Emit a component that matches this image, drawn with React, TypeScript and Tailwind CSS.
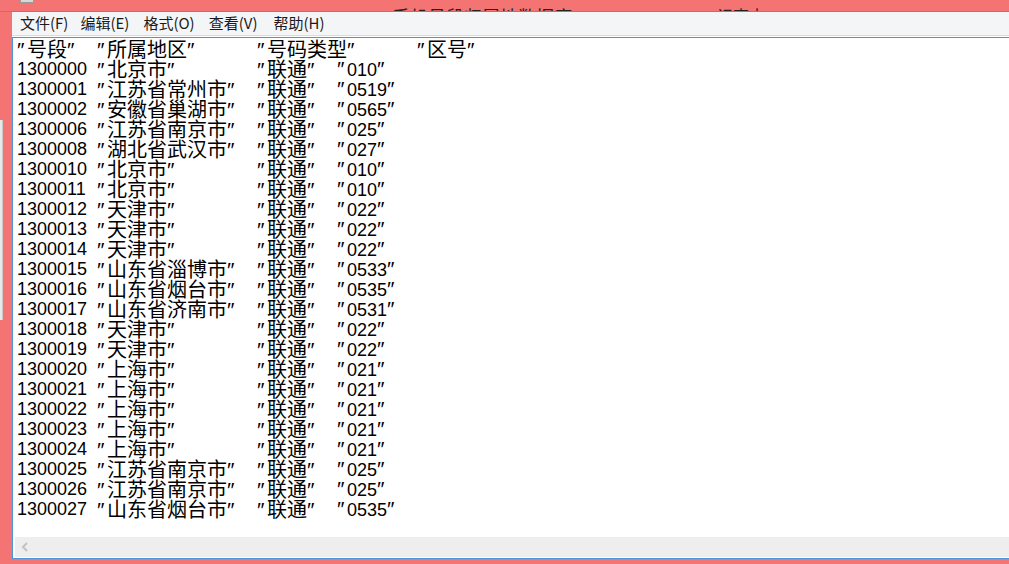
import React from "react";

const rows: [string, string, string][] = [
  ["1300000", "北京市", "010"],
  ["1300001", "江苏省常州市", "0519"],
  ["1300002", "安徽省巢湖市", "0565"],
  ["1300006", "江苏省南京市", "025"],
  ["1300008", "湖北省武汉市", "027"],
  ["1300010", "北京市", "010"],
  ["1300011", "北京市", "010"],
  ["1300012", "天津市", "022"],
  ["1300013", "天津市", "022"],
  ["1300014", "天津市", "022"],
  ["1300015", "山东省淄博市", "0533"],
  ["1300016", "山东省烟台市", "0535"],
  ["1300017", "山东省济南市", "0531"],
  ["1300018", "天津市", "022"],
  ["1300019", "天津市", "022"],
  ["1300020", "上海市", "021"],
  ["1300021", "上海市", "021"],
  ["1300022", "上海市", "021"],
  ["1300023", "上海市", "021"],
  ["1300024", "上海市", "021"],
  ["1300025", "江苏省南京市", "025"],
  ["1300026", "江苏省南京市", "025"],
  ["1300027", "山东省烟台市", "0535"],
];

function T({ s }: { s: string }) {
  const parts: React.ReactNode[] = [];
  let i = 0;
  for (const ch of s) {
    if (ch === '"') {
      parts.push(
        <span key={i} className="inline-block w-[10px] text-[21px] leading-[20px]">
          ″
        </span>
      );
    } else if (/[\u4e00-\u9fff]/.test(ch)) {
      parts.push(
        <span key={i} className="inline-block w-[20px] text-[20px] font-['Noto_Sans_CJK_SC',sans-serif]">
          {ch}
        </span>
      );
    } else {
      parts.push(
        <span key={i} className="text-[18px]">
          {ch}
        </span>
      );
    }
    i++;
  }
  return <>{parts}</>;
}

export default function App() {
  return (
    <div className="relative w-[1009px] h-[564px] overflow-hidden bg-[#f47373] flex flex-col font-['Liberation_Sans','Noto_Sans_CJK_SC',sans-serif] text-black">
      {/* strip of a window behind, at the far left */}
      <div className="absolute left-0 top-[120px] w-[3px] h-[200px] bg-[#e9e9e9] border-r border-[#c8c8c8]" />
      {/* title bar (only bottom sliver visible) */}
      <div className="relative h-[11px] shrink-0 overflow-hidden">
        <div className="absolute left-[20px] top-[-12px] w-[14px] h-[15px] bg-[#d8d8d8] border border-[#9a9a9a]" />
        <div className="flex items-end h-[11px] pl-[392px] leading-[16px] text-[#222] font-['Noto_Sans_CJK_SC',sans-serif]">
          <span className="translate-y-[13px] text-[18px]">手机号段归属地数据库</span>
          <span className="ml-[145px] translate-y-[12px] text-[16px]">记事本</span>
        </div>
      </div>
      <div className="h-px shrink-0 bg-[#dc6262]" />
      <div className="flex-1 flex flex-col pl-[12px] pb-[5px]">
        {/* menu bar */}
        <div className="h-[23px] shrink-0 bg-[#f4f5f7] flex items-center pl-[2px] text-[15px] text-[#1a1a1a] font-['Noto_Sans_CJK_SC',sans-serif]">
          <span className="px-[6px]">文件(F)</span>
          <span className="px-[6px]">编辑(E)</span>
          <span className="px-[6px] ml-[2px]">格式(O)</span>
          <span className="px-[6px] ml-[2px]">查看(V)</span>
          <span className="px-[6px] ml-[4px]">帮助(H)</span>
        </div>
        <div className="h-px shrink-0 bg-[#dcdcdc]" />
        <div className="h-px shrink-0 bg-white" />
        {/* edit area */}
        <div className="flex-1 flex flex-col bg-white border-l border-t border-b border-[#4c94dc]">
          <div className="flex-1 pt-px pl-[4px] leading-[20px] whitespace-pre">
            <div className="flex h-[20px]">
              <div className="w-[80px]"><T s={'"号段"'} /></div>
              <div className="w-[160px]"><T s={'"所属地区"'} /></div>
              <div className="w-[160px]"><T s={'"号码类型"'} /></div>
              <div><T s={'"区号"'} /></div>
            </div>
            {rows.map((r) => (
              <div key={r[0]} className="flex h-[20px]">
                <div className="w-[80px]"><T s={r[0]} /></div>
                <div className="w-[160px]"><T s={`"${r[1]}"`} /></div>
                <div className="w-[80px]"><T s={'"联通"'} /></div>
                <div><T s={`"${r[2]}"`} /></div>
              </div>
            ))}
          </div>
          {/* horizontal scrollbar */}
          <div className="h-[20px] shrink-0 ml-[2px] bg-[#eeeeee] flex items-center pl-[6px]">
            <svg width="8" height="10" viewBox="0 0 8 10">
              <polyline points="6,1 2,5 6,9" fill="none" stroke="#c2c2c2" strokeWidth="2" />
            </svg>
          </div>
          <div className="h-px shrink-0 bg-white" />
        </div>
      </div>
    </div>
  );
}
